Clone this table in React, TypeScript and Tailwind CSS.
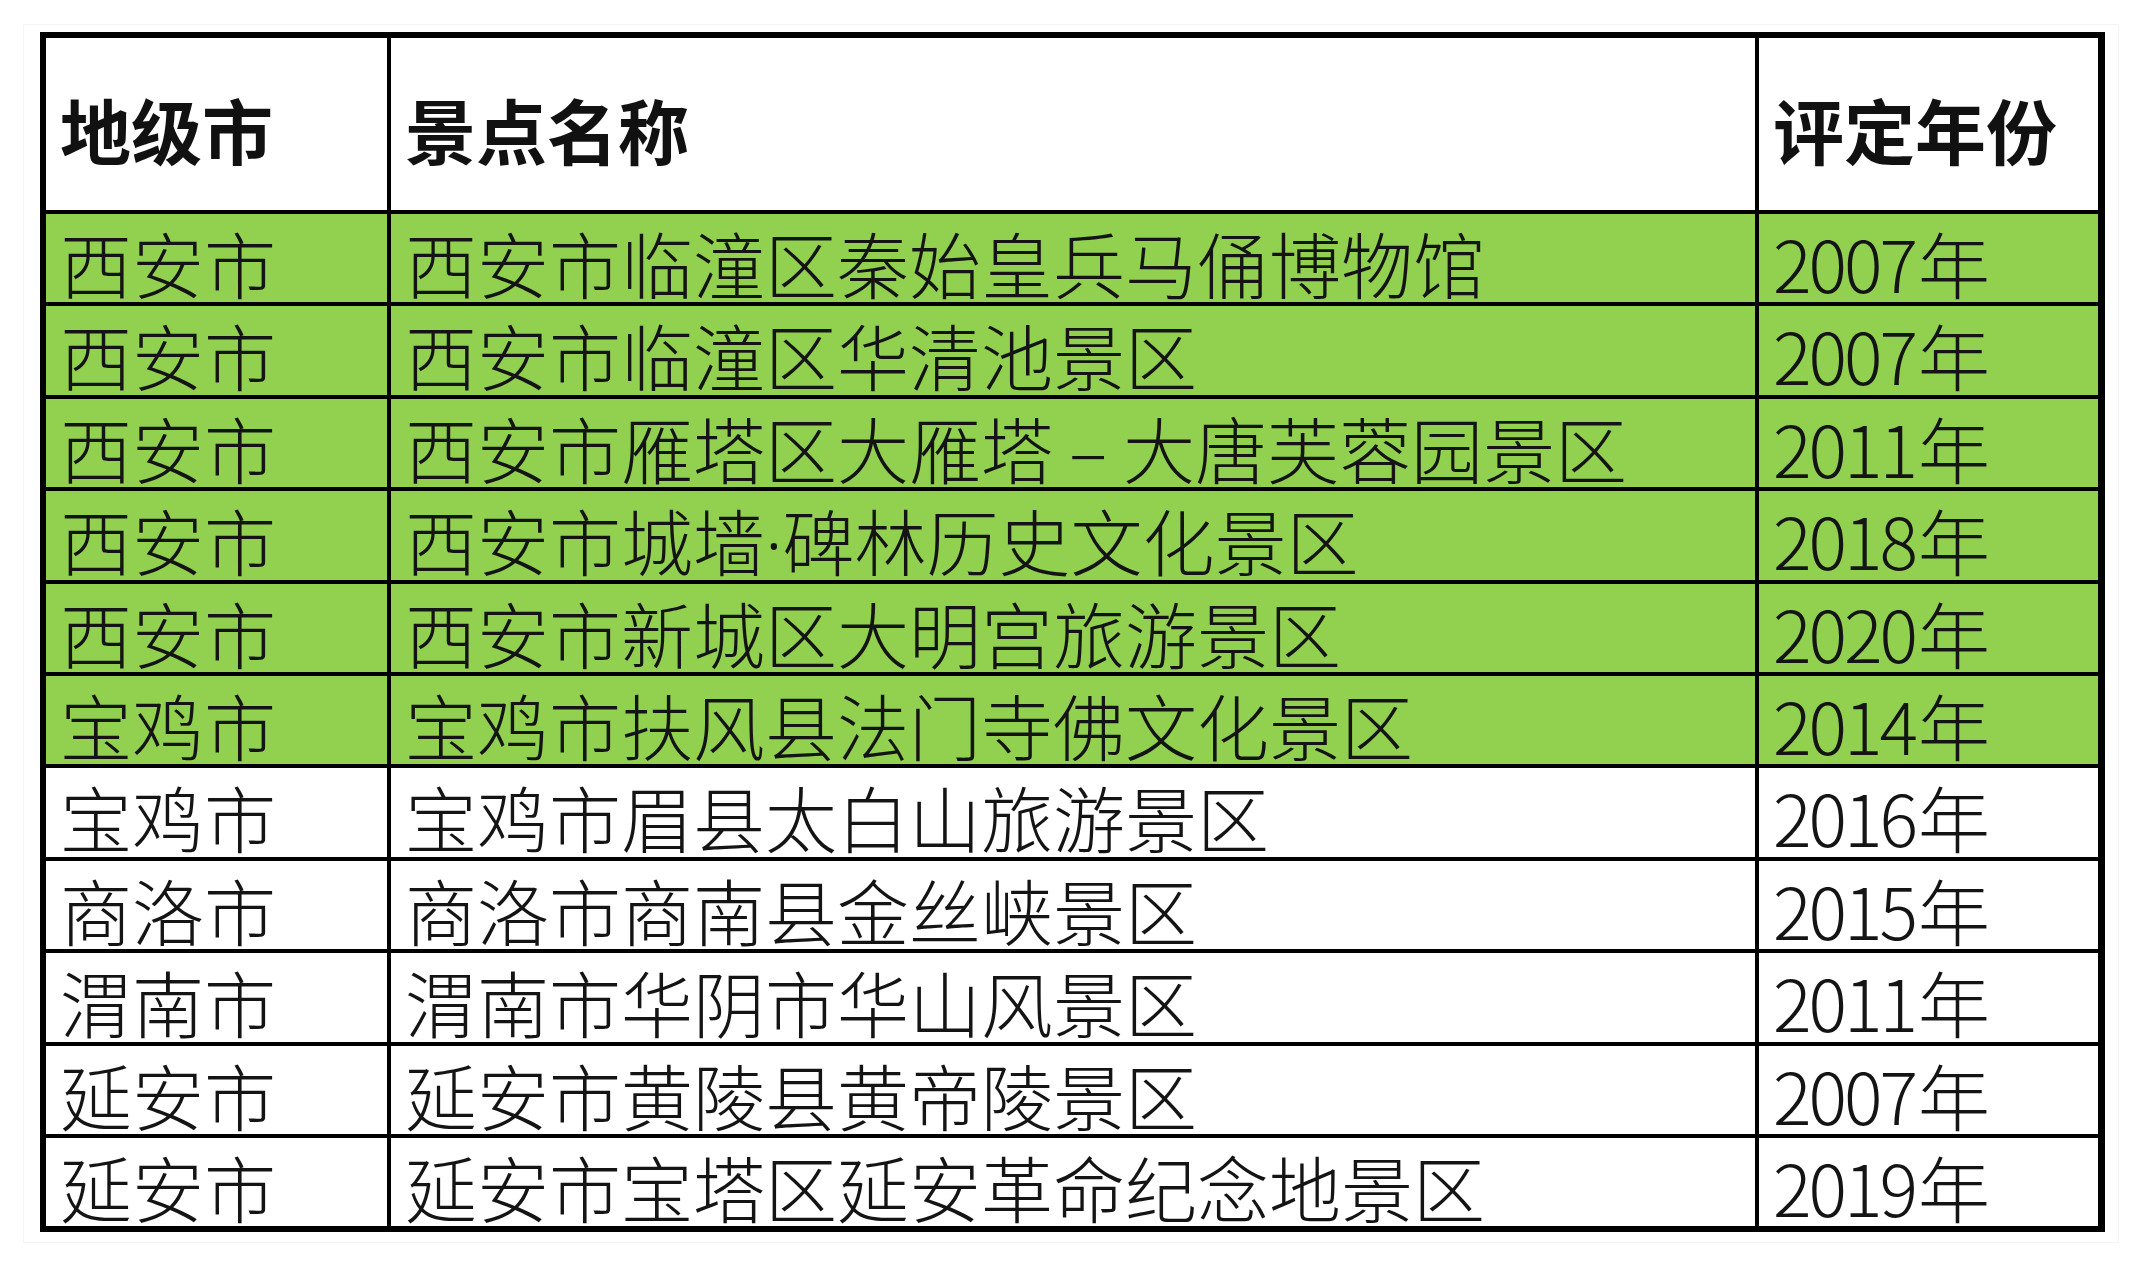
const ROWS: { city: string; name: string; year: string; green: boolean }[] = [
  { city: "西安市", name: "西安市临潼区秦始皇兵马俑博物馆", year: "2007", green: true },
  { city: "西安市", name: "西安市临潼区华清池景区", year: "2007", green: true },
  { city: "西安市", name: "西安市雁塔区大雁塔 – 大唐芙蓉园景区", year: "2011", green: true },
  { city: "西安市", name: "西安市城墙·碑林历史文化景区", year: "2018", green: true },
  { city: "西安市", name: "西安市新城区大明宫旅游景区", year: "2020", green: true },
  { city: "宝鸡市", name: "宝鸡市扶风县法门寺佛文化景区", year: "2014", green: true },
  { city: "宝鸡市", name: "宝鸡市眉县太白山旅游景区", year: "2016", green: false },
  { city: "商洛市", name: "商洛市商南县金丝峡景区", year: "2015", green: false },
  { city: "渭南市", name: "渭南市华阴市华山风景区", year: "2011", green: false },
  { city: "延安市", name: "延安市黄陵县黄帝陵景区", year: "2007", green: false },
  { city: "延安市", name: "延安市宝塔区延安革命纪念地景区", year: "2019", green: false },
];

const FONT = "font-['Noto_Sans_CJK_SC','Noto_Sans',sans-serif]";

// the middle dot should stay narrow, not full-width
function Name({ text }: { text: string }) {
  const parts = text.split("·");
  if (parts.length === 1) return <>{text}</>;
  return (
    <>
      {parts[0]}
      <span className="font-['Noto_Sans',sans-serif]">·</span>
      {parts[1]}
    </>
  );
}

export default function App() {
  return (
    <div className={`min-h-[1280px] w-[2140px] bg-white ${FONT}`}>
      <div className="ml-[23px] mt-[24px] w-[2096px] border border-[#f4f4f4] pb-[10px] pl-[16px] pr-[13px] pt-[7px]">
        <div className="grid grid-cols-[341px_1364px_339px] grid-rows-[172px_repeat(11,88.4px)] gap-[4px] bg-black p-[6px]">
          {["地级市", "景点名称", "评定年份"].map((h) => (
            <div
              key={h}
              className="bg-white pl-[14px] pt-[55px] text-[71px] font-bold leading-[71px] text-[#111]"
            >
              {h}
            </div>
          ))}
          {ROWS.map((r, i) => {
            const bg = r.green ? "bg-[#92d050]" : "bg-white";
            const cell = `${bg} whitespace-nowrap pl-[14px] pt-[12px] text-[72px] font-light leading-[72px] text-[#141414]`;
            return [
              <div key={`${i}-c`} className={cell}>
                {r.city}
              </div>,
              <div key={`${i}-n`} className={cell}>
                <Name text={r.name} />
              </div>,
              <div key={`${i}-y`} className={cell}>
                <span className="tracking-[-3px]">{r.year}</span>
                <span className="ml-[3px]">年</span>
              </div>,
            ];
          })}
        </div>
      </div>
    </div>
  );
}
